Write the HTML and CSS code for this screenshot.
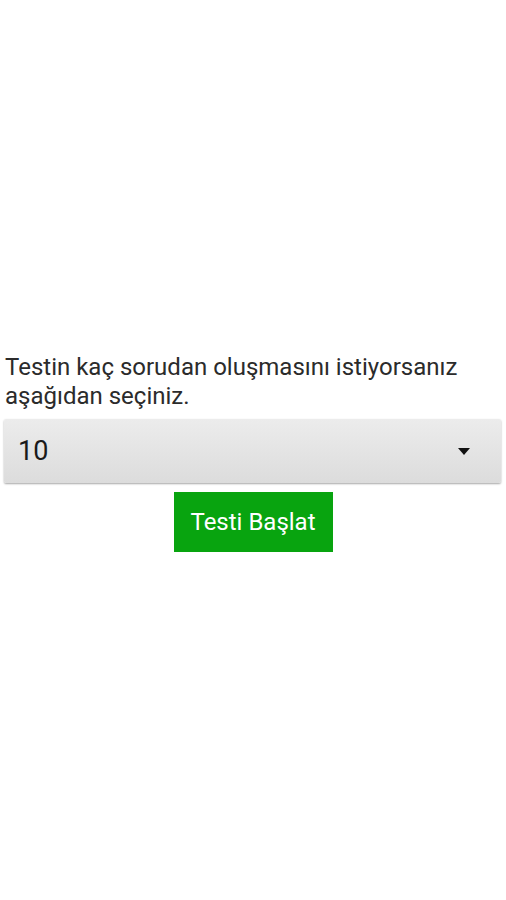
FILE: index.html
```html
<!DOCTYPE html>
<html lang="tr">
<head>
<meta charset="utf-8">
<title>Test</title>
<link rel="stylesheet" href="styles.css">
</head>
<body>
<main class="page">
  <section class="content">
    <p class="prompt">Testin kaç sorudan oluşmasını istiyorsanız aşağıdan seçiniz.</p>
    <div class="spinner">
      <span class="spinner-value">10</span>
      <svg class="spinner-arrow" width="12" height="7" viewBox="0 0 12 7"><path d="M0 0H12L6 7Z" fill="#111"/></svg>
    </div>
    <div class="actions">
      <button class="start">Testi Başlat</button>
    </div>
  </section>
</main>
</body>
</html>
```
FILE: styles.css
```css
html, body {
  margin: 0;
  padding: 0;
  background: #fff;
}
body {
  font-family: Roboto, "Noto Sans", sans-serif;
  color: #222;
}
.page {
  min-height: 900px;
  box-sizing: border-box;
  padding-top: 5px;
  display: flex;
  flex-direction: column;
  justify-content: center;
}
.content {
  padding: 0 5px 0 4px;
  display: flex;
  flex-direction: column;
}
.prompt {
  margin: 0 0 0 1px;
  font-size: 24px;
  line-height: 29px;
  color: #2b2b2b;
}
.spinner {
  margin-top: 8px;
  height: 64px;
  box-sizing: border-box;
  display: flex;
  align-items: center;
  justify-content: space-between;
  padding: 0 31px 0 14px;
  background: linear-gradient(#ececec, #dcdcdc);
  border-radius: 2px;
  box-shadow: 0 1px 2px rgba(0,0,0,0.35);
}
.spinner-value {
  font-size: 27px;
  color: #1a1a1a;
}
.actions {
  display: flex;
  justify-content: center;
  margin-top: 9px;
}
.start {
  width: 159px;
  height: 60px;
  border: 0;
  border-radius: 0;
  background: #08a40f;
  color: #fff;
  font-family: Roboto, "Noto Sans", sans-serif;
  font-size: 24px;
  padding: 0;
  margin-left: 1px;
}
```
